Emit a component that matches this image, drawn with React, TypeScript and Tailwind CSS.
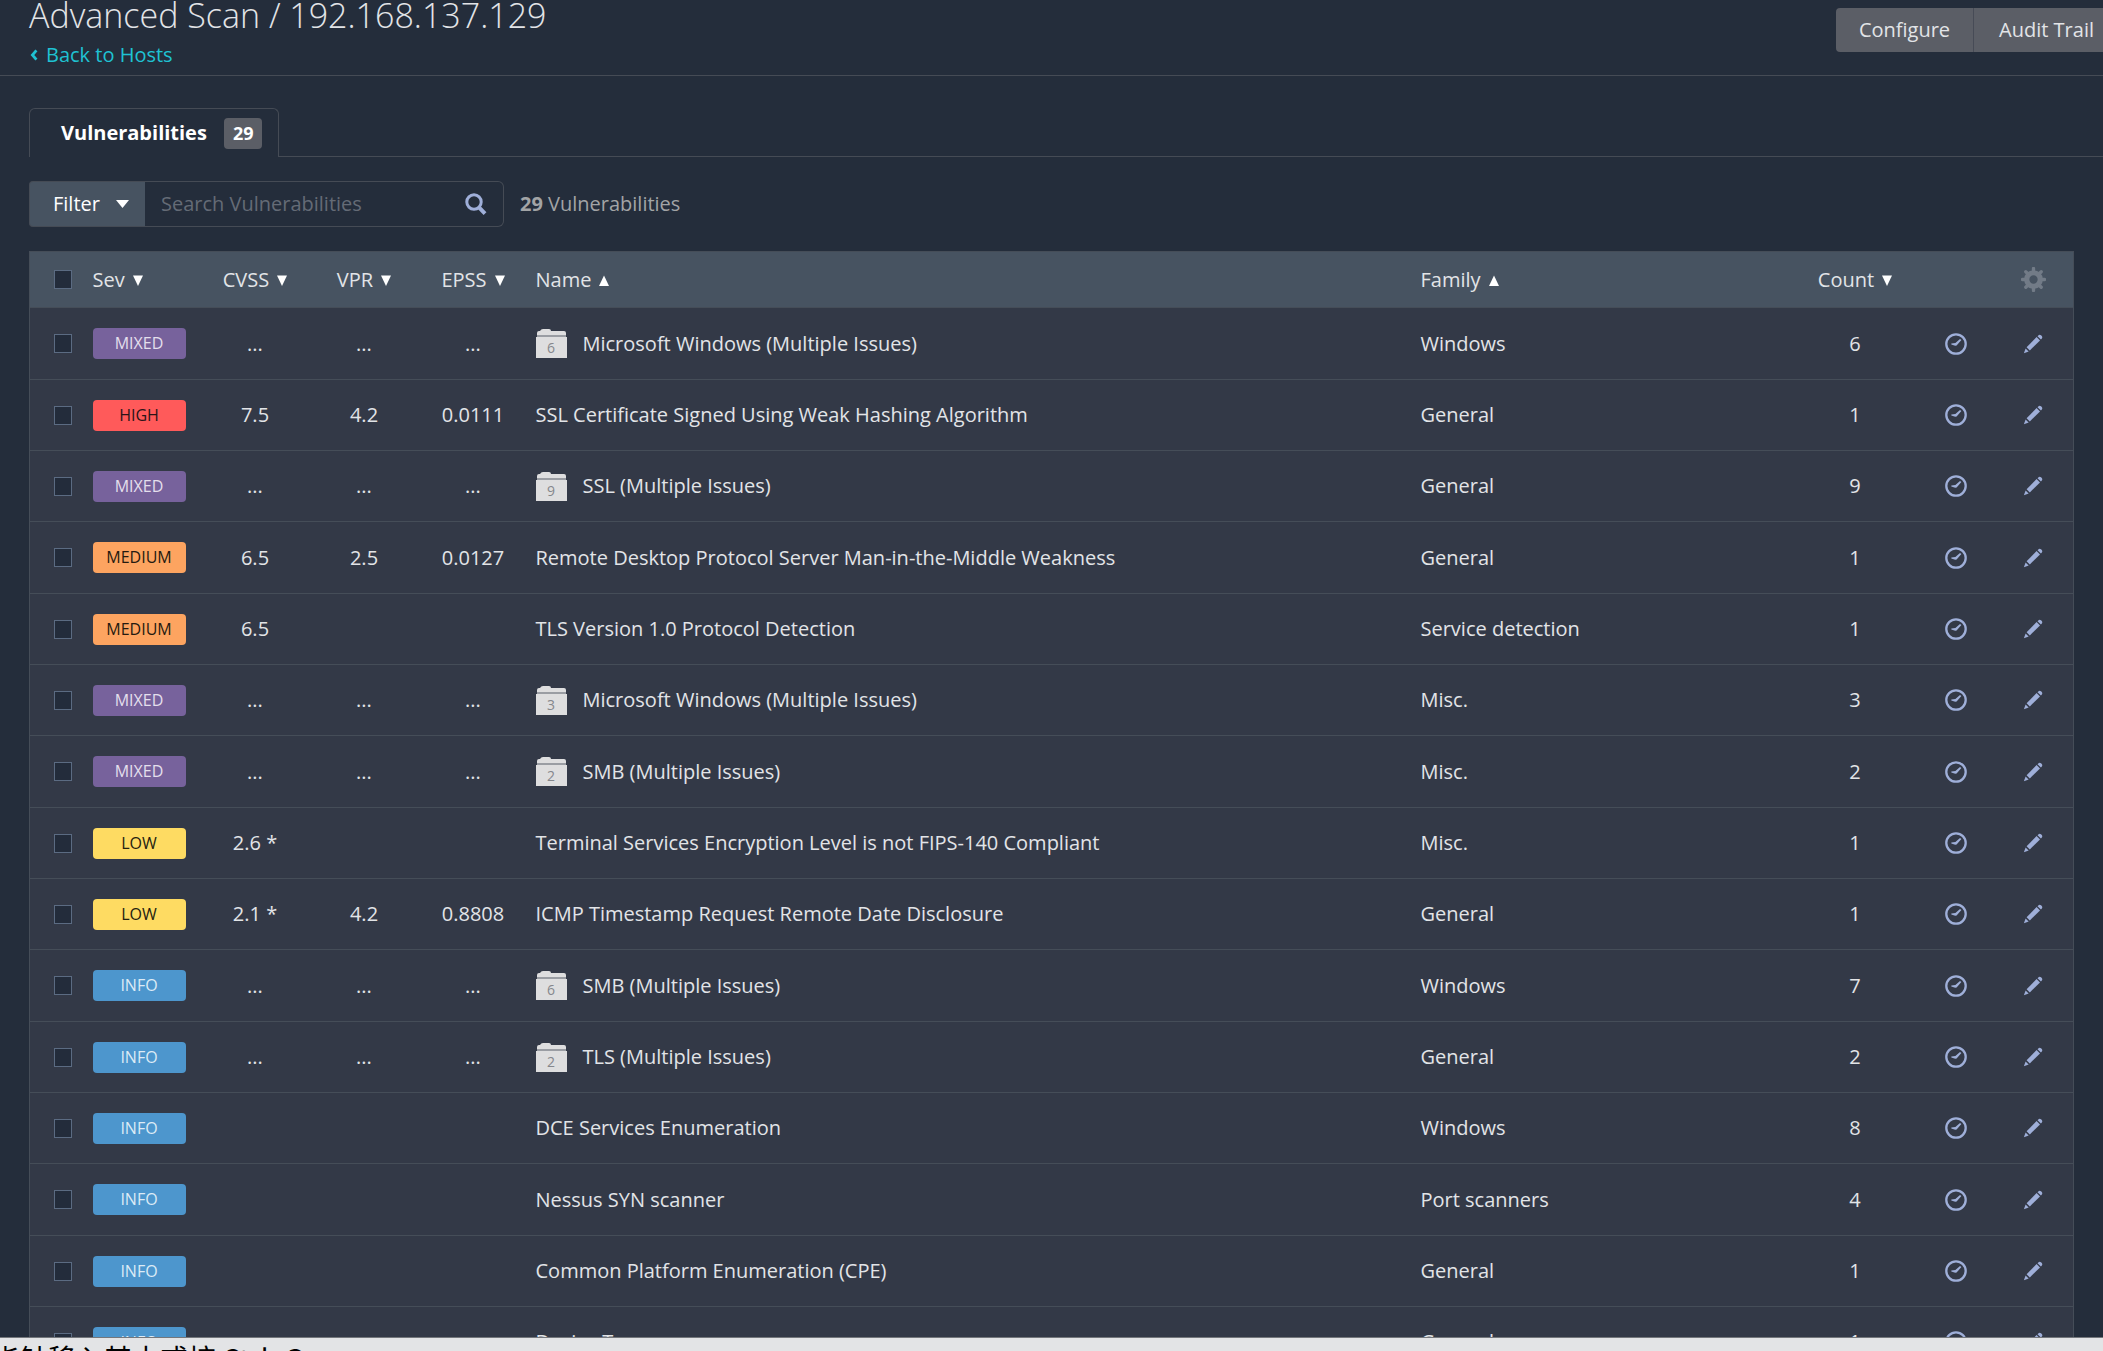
import React, { useState } from "react";

type Severity = "MIXED" | "HIGH" | "MEDIUM" | "LOW" | "INFO";

interface Vulnerability {
  sev: Severity;
  cvss?: string;
  vpr?: string;
  epss?: string;
  name: string;
  family: string;
  count: number;
  group?: number;
}

const severityStyles: Record<Severity, string> = {
  MIXED: "bg-[#77629c] text-[#e4dfec]",
  HIGH: "bg-[#ff5a5a] text-[#2a1418]",
  MEDIUM: "bg-[#fda460] text-[#251a10]",
  LOW: "bg-[#fedb62] text-[#252210]",
  INFO: "bg-[#4d96cd] text-[#dcebf6]",
};

const vulnerabilities: Vulnerability[] = [
  { sev: "MIXED", cvss: "...", vpr: "...", epss: "...", name: "Microsoft Windows (Multiple Issues)", family: "Windows", count: 6, group: 6 },
  { sev: "HIGH", cvss: "7.5", vpr: "4.2", epss: "0.0111", name: "SSL Certificate Signed Using Weak Hashing Algorithm", family: "General", count: 1 },
  { sev: "MIXED", cvss: "...", vpr: "...", epss: "...", name: "SSL (Multiple Issues)", family: "General", count: 9, group: 9 },
  { sev: "MEDIUM", cvss: "6.5", vpr: "2.5", epss: "0.0127", name: "Remote Desktop Protocol Server Man-in-the-Middle Weakness", family: "General", count: 1 },
  { sev: "MEDIUM", cvss: "6.5", name: "TLS Version 1.0 Protocol Detection", family: "Service detection", count: 1 },
  { sev: "MIXED", cvss: "...", vpr: "...", epss: "...", name: "Microsoft Windows (Multiple Issues)", family: "Misc.", count: 3, group: 3 },
  { sev: "MIXED", cvss: "...", vpr: "...", epss: "...", name: "SMB (Multiple Issues)", family: "Misc.", count: 2, group: 2 },
  { sev: "LOW", cvss: "2.6 *", name: "Terminal Services Encryption Level is not FIPS-140 Compliant", family: "Misc.", count: 1 },
  { sev: "LOW", cvss: "2.1 *", vpr: "4.2", epss: "0.8808", name: "ICMP Timestamp Request Remote Date Disclosure", family: "General", count: 1 },
  { sev: "INFO", cvss: "...", vpr: "...", epss: "...", name: "SMB (Multiple Issues)", family: "Windows", count: 7, group: 6 },
  { sev: "INFO", cvss: "...", vpr: "...", epss: "...", name: "TLS (Multiple Issues)", family: "General", count: 2, group: 2 },
  { sev: "INFO", name: "DCE Services Enumeration", family: "Windows", count: 8 },
  { sev: "INFO", name: "Nessus SYN scanner", family: "Port scanners", count: 4 },
  { sev: "INFO", name: "Common Platform Enumeration (CPE)", family: "General", count: 1 },
  { sev: "INFO", name: "Device Type", family: "General", count: 1 },
];

function SortHeader({ label, up }: { label: string; up?: boolean }) {
  return (
    <button type="button" className="inline-flex items-center gap-2 cursor-pointer">
      {label}
      <svg viewBox="0 0 10 12" className="w-[10px] h-3 fill-white" aria-hidden="true">
        {up ? <path d="M5 1.5 L10 12 H0 Z" /> : <path d="M0 1.5 H10 L5 12 Z" />}
      </svg>
    </button>
  );
}

function Checkbox({ label, checked, onChange }: { label: string; checked: boolean; onChange: () => void }) {
  return (
    <input
      type="checkbox"
      aria-label={label}
      checked={checked}
      onChange={onChange}
      className="block appearance-none w-[18px] h-[19px] bg-[#232c3b] border border-[#5b6b82] checked:bg-[#4d96cd]"
    />
  );
}

function FolderIcon({ count }: { count: number }) {
  return (
    <span className="relative inline-block w-[31px] h-[29px] shrink-0">
      <svg viewBox="0 0 31 29" className="w-full h-full" aria-hidden="true">
        <path d="M1 6 V4 Q1 2 3 2 H4 Q5 0 7 0 H13 Q15 0 15 2 H28 Q30 2 30 4 V6 Z" fill="#dededf" />
        <path d="M1 6 H30 V8 H1 Z" fill="#9a9da3" />
        <path d="M0 8 H31 V29 H0 Z" fill="#dededf" />
      </svg>
      <span className="absolute inset-x-0 bottom-0 h-5 text-center text-sm leading-5 text-[#85878c]">{count}</span>
    </span>
  );
}

function ClockIcon() {
  return (
    <svg viewBox="0 0 22 22" className="w-[22px] h-[22px]" fill="none" aria-hidden="true">
      <circle cx="11" cy="11" r="9.7" stroke="#9fafd9" strokeWidth="2.3" />
      <path d="M6.3 10.4 L10.4 10 L15 6 L16.4 6.9 L11.6 12.6 L10.2 12.7 L6.3 11.6 Z" fill="#9fafd9" />
    </svg>
  );
}

function PencilIcon() {
  return (
    <svg viewBox="0 0 20 20" className="w-5 h-5 fill-[#9fafd9]" aria-hidden="true">
      <path d="M15.3 1.4 Q16.6 0 18 1.3 L18.8 2.1 Q20 3.4 18.7 4.7 L17.9 5.5 L14.5 2.2 Z" />
      <path d="M13.6 3.1 L17 6.4 L6.8 16.4 L3.6 13.2 Z" />
      <path d="M2.6 14.4 L5.7 17.4 L0.9 19.2 Z" />
    </svg>
  );
}

function GearIcon() {
  return (
    <svg viewBox="0 0 24 24" className="w-[25px] h-[25px]" fill="none" stroke="#727b87" aria-hidden="true">
      <circle cx="12" cy="12" r="6.5" strokeWidth="5" />
      <path
        d="M12 1.4 V5 M12 19 V22.6 M1.4 12 H5 M19 12 H22.6 M4.6 4.6 L7 7 M17 17 L19.4 19.4 M4.6 19.4 L7 17 M17 7 L19.4 4.6"
        strokeWidth="3.2"
        strokeLinecap="round"
      />
    </svg>
  );
}

export default function App() {
  const [search, setSearch] = useState("");
  const [selected, setSelected] = useState<number[]>([]);

  const toggle = (i: number) => {
    setSelected(selected.includes(i) ? selected.filter((n) => n !== i) : [...selected, i]);
  };

  const toggleAll = () => {
    setSelected(selected.length === vulnerabilities.length ? [] : vulnerabilities.map((_, i) => i));
  };

  return (
    <div className="h-screen flex flex-col overflow-hidden bg-[#242d3b] text-[#e2e4e7] text-[20px] leading-7 font-['Open_Sans',sans-serif]">
      <main className="flex-1 min-h-0 overflow-hidden">
        {/* Page header */}
        <header className="flex justify-between items-start h-[76px] pl-[29px] border-b border-[#454b55]">
          <div>
            <h1 className="text-[34px] leading-[30px] font-light">Advanced Scan / 192.168.137.129</h1>
            <a href="#hosts" className="flex items-center gap-2 mt-[11px] text-[#1fc2d3]">
              <svg viewBox="0 0 9 12" className="w-[9px] h-3" fill="none" stroke="currentColor" strokeWidth="2.8" aria-hidden="true">
                <path d="M7.4 1.4 L3.4 6 L7.4 10.6" />
              </svg>
              Back to Hosts
            </a>
          </div>
          <div className="flex mt-2 h-11 shrink-0">
            <button type="button" className="px-[23px] rounded-l-sm bg-[#5b5e66] cursor-pointer">
              Configure
            </button>
            <button type="button" className="pl-[25px] pr-[9px] border-l border-[#474b56] bg-[#5b5e66] cursor-pointer">
              Audit Trail
            </button>
          </div>
        </header>

        {/* Tabs */}
        <div className="flex mt-8 pl-[29px]">
          <a
            href="#vulnerabilities"
            className="flex items-center gap-[17px] h-[49px] pl-[31px] pr-4 border border-b-0 border-[#454b55] rounded-t-md font-bold text-white"
          >
            Vulnerabilities
            <span className="px-[9px] rounded-sm bg-[#5b5e66] text-lg leading-[31px]">29</span>
          </a>
          <div className="flex-1 border-b border-[#454b55]" />
        </div>

        <div className="px-[29px]">
          {/* Filter and search */}
          <div className="flex items-center mt-6">
            <button
              type="button"
              className="flex items-center gap-4 h-[46px] pl-[23px] pr-4 border border-r-0 border-[#454b55] rounded-l-sm bg-[#475361] text-white cursor-pointer"
            >
              Filter
              <svg viewBox="0 0 13 8" className="w-[13px] h-2 fill-white" aria-hidden="true">
                <path d="M0 0 H13 L6.5 8 Z" />
              </svg>
            </button>
            <div className="flex items-center w-[359px] h-[46px] pl-4 pr-4 border border-l-0 border-[#454b55] rounded-r-md">
              <input
                type="text"
                aria-label="Search Vulnerabilities"
                placeholder="Search Vulnerabilities"
                value={search}
                onChange={(e) => setSearch(e.target.value)}
                className="flex-1 min-w-0 bg-transparent outline-none placeholder-[#646b76]"
              />
              <svg viewBox="0 0 22 22" className="w-[22px] h-[22px]" fill="none" stroke="#9fafd9" aria-hidden="true">
                <circle cx="9" cy="9" r="7.2" strokeWidth="3" />
                <path d="M14 14.4 L20 20.6" strokeWidth="4" />
              </svg>
            </div>
            <span className="ml-4 text-[#a2a4a6]">
              <strong>29</strong> Vulnerabilities
            </span>
          </div>

          {/* Vulnerability list */}
          <table className="w-full mt-6 table-fixed border border-[#454d58] bg-[#333947]">
            <colgroup>
              <col className="w-[63px]" />
              <col className="w-[108px]" />
              <col className="w-[109px]" />
              <col className="w-[109px]" />
              <col className="w-[109px]" />
              <col />
              <col className="w-[372px]" />
              <col className="w-[125px]" />
              <col className="w-[76px]" />
              <col className="w-[80px]" />
            </colgroup>
            <thead>
              <tr className="h-14 bg-[#475361] [&>th]:font-normal [&>th]:p-0">
                <th>
                  <div className="pl-6">
                    <Checkbox label="Select all" checked={selected.length === vulnerabilities.length} onChange={toggleAll} />
                  </div>
                </th>
                <th className="text-left"><SortHeader label="Sev" /></th>
                <th><SortHeader label="CVSS" /></th>
                <th><SortHeader label="VPR" /></th>
                <th><SortHeader label="EPSS" /></th>
                <th className="text-left"><div className="pl-2"><SortHeader label="Name" up /></div></th>
                <th className="text-left"><SortHeader label="Family" up /></th>
                <th><SortHeader label="Count" /></th>
                <th />
                <th>
                  <button type="button" aria-label="Table settings" className="block mx-auto cursor-pointer">
                    <GearIcon />
                  </button>
                </th>
              </tr>
            </thead>
            <tbody>
              {vulnerabilities.map((v, i) => (
                <tr key={i} className="h-[71px] nth-[3n+1]:h-[72px] border-t border-[#454d58] text-center">
                  <td className="pl-6">
                    <Checkbox label={`Select ${v.name}`} checked={selected.includes(i)} onChange={() => toggle(i)} />
                  </td>
                  <td>
                    <span className={`block w-[93px] h-[31px] rounded-sm text-base leading-[31px] ${severityStyles[v.sev]}`}>
                      {v.sev}
                    </span>
                  </td>
                  <td>{v.cvss}</td>
                  <td>{v.vpr}</td>
                  <td>{v.epss}</td>
                  <td className="pl-2 text-left">
                    <div className="flex items-center gap-4">
                      {v.group && <FolderIcon count={v.group} />}
                      {v.name}
                    </div>
                  </td>
                  <td className="text-left">{v.family}</td>
                  <td>{v.count}</td>
                  <td>
                    <button type="button" aria-label="Snooze" className="block mx-auto cursor-pointer">
                      <ClockIcon />
                    </button>
                  </td>
                  <td>
                    <button type="button" aria-label="Modify" className="block mx-auto cursor-pointer">
                      <PencilIcon />
                    </button>
                  </td>
                </tr>
              ))}
            </tbody>
          </table>
        </div>
      </main>

      {/* Status bar, cut by the window edge */}
      <footer className="h-[14px] shrink-0 overflow-hidden border-t border-[#74777c] bg-[#e3e4e6] text-black">
        <p className="-ml-2 pt-1 text-[28px] leading-8 font-['Noto_Sans_CJK_SC',sans-serif]">指针移入其中或按 Ctrl+G</p>
      </footer>
    </div>
  );
}
